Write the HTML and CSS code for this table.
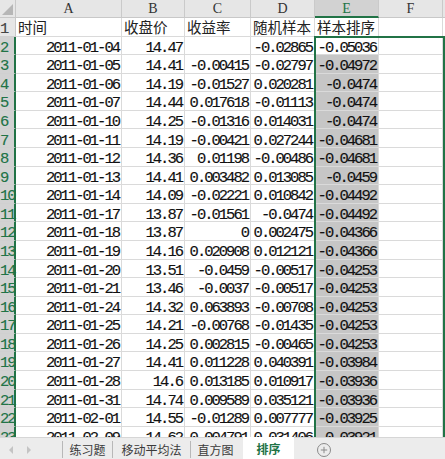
FILE: index.html
```html
<!DOCTYPE html>
<html lang="zh">
<head>
<meta charset="utf-8">
<link rel="stylesheet" href="styles.css">
</head>
<body>
<div class="sheet">
  <div class="grid" id="grid">
    <div class="corner"><span class="tri"></span></div>
    <div class="ch">A</div>
    <div class="ch">B</div>
    <div class="ch">C</div>
    <div class="ch">D</div>
    <div class="ch ch-sel">E</div>
    <div class="ch">F</div>
    <div class="ch"></div>

    <div class="rh">1</div>
    <div class="c t">时间</div><div class="c t">收盘价</div><div class="c t">收益率</div><div class="c t">随机样本</div><div class="c t">样本排序</div><div class="c"></div><div class="c"></div>

    <div class="rh rh-sel">2</div>
    <div class="c">2011-01-04</div><div class="c">14.47</div><div class="c"></div><div class="c">-0.02865</div><div class="c">-0.05036</div><div class="c"></div><div class="c"></div>

    <div class="rh rh-sel">3</div>
    <div class="c">2011-01-05</div><div class="c">14.41</div><div class="c">-0.00415</div><div class="c">-0.02797</div><div class="c e">-0.04972</div><div class="c"></div><div class="c"></div>

    <div class="rh rh-sel">4</div>
    <div class="c">2011-01-06</div><div class="c">14.19</div><div class="c">-0.01527</div><div class="c">0.020281</div><div class="c e">-0.0474</div><div class="c"></div><div class="c"></div>

    <div class="rh rh-sel">5</div>
    <div class="c">2011-01-07</div><div class="c">14.44</div><div class="c">0.017618</div><div class="c">-0.01113</div><div class="c e">-0.0474</div><div class="c"></div><div class="c"></div>

    <div class="rh rh-sel">6</div>
    <div class="c">2011-01-10</div><div class="c">14.25</div><div class="c">-0.01316</div><div class="c">0.014031</div><div class="c e">-0.0474</div><div class="c"></div><div class="c"></div>

    <div class="rh rh-sel">7</div>
    <div class="c">2011-01-11</div><div class="c">14.19</div><div class="c">-0.00421</div><div class="c">0.027244</div><div class="c e">-0.04681</div><div class="c"></div><div class="c"></div>

    <div class="rh rh-sel">8</div>
    <div class="c">2011-01-12</div><div class="c">14.36</div><div class="c">0.01198</div><div class="c">-0.00486</div><div class="c e">-0.04681</div><div class="c"></div><div class="c"></div>

    <div class="rh rh-sel">9</div>
    <div class="c">2011-01-13</div><div class="c">14.41</div><div class="c">0.003482</div><div class="c">0.013085</div><div class="c e">-0.0459</div><div class="c"></div><div class="c"></div>

    <div class="rh rh-sel">10</div>
    <div class="c">2011-01-14</div><div class="c">14.09</div><div class="c">-0.02221</div><div class="c">0.010842</div><div class="c e">-0.04492</div><div class="c"></div><div class="c"></div>

    <div class="rh rh-sel">11</div>
    <div class="c">2011-01-17</div><div class="c">13.87</div><div class="c">-0.01561</div><div class="c">-0.0474</div><div class="c e">-0.04492</div><div class="c"></div><div class="c"></div>

    <div class="rh rh-sel">12</div>
    <div class="c">2011-01-18</div><div class="c">13.87</div><div class="c">0</div><div class="c">0.002475</div><div class="c e">-0.04366</div><div class="c"></div><div class="c"></div>

    <div class="rh rh-sel">13</div>
    <div class="c">2011-01-19</div><div class="c">14.16</div><div class="c">0.020908</div><div class="c">0.012121</div><div class="c e">-0.04366</div><div class="c"></div><div class="c"></div>

    <div class="rh rh-sel">14</div>
    <div class="c">2011-01-20</div><div class="c">13.51</div><div class="c">-0.0459</div><div class="c">-0.00517</div><div class="c e">-0.04253</div><div class="c"></div><div class="c"></div>

    <div class="rh rh-sel">15</div>
    <div class="c">2011-01-21</div><div class="c">13.46</div><div class="c">-0.0037</div><div class="c">-0.00517</div><div class="c e">-0.04253</div><div class="c"></div><div class="c"></div>

    <div class="rh rh-sel">16</div>
    <div class="c">2011-01-24</div><div class="c">14.32</div><div class="c">0.063893</div><div class="c">-0.00708</div><div class="c e">-0.04253</div><div class="c"></div><div class="c"></div>

    <div class="rh rh-sel">17</div>
    <div class="c">2011-01-25</div><div class="c">14.21</div><div class="c">-0.00768</div><div class="c">-0.01435</div><div class="c e">-0.04253</div><div class="c"></div><div class="c"></div>

    <div class="rh rh-sel">18</div>
    <div class="c">2011-01-26</div><div class="c">14.25</div><div class="c">0.002815</div><div class="c">-0.00465</div><div class="c e">-0.04253</div><div class="c"></div><div class="c"></div>

    <div class="rh rh-sel">19</div>
    <div class="c">2011-01-27</div><div class="c">14.41</div><div class="c">0.011228</div><div class="c">0.040391</div><div class="c e">-0.03984</div><div class="c"></div><div class="c"></div>

    <div class="rh rh-sel">20</div>
    <div class="c">2011-01-28</div><div class="c">14.6</div><div class="c">0.013185</div><div class="c">0.010917</div><div class="c e">-0.03936</div><div class="c"></div><div class="c"></div>

    <div class="rh rh-sel">21</div>
    <div class="c">2011-01-31</div><div class="c">14.74</div><div class="c">0.009589</div><div class="c">0.035121</div><div class="c e">-0.03936</div><div class="c"></div><div class="c"></div>

    <div class="rh rh-sel">22</div>
    <div class="c">2011-02-01</div><div class="c">14.55</div><div class="c">-0.01289</div><div class="c">0.007777</div><div class="c e">-0.03925</div><div class="c"></div><div class="c"></div>

    <div class="rh rh-sel">23</div>
    <div class="c">2011-02-09</div><div class="c">14.62</div><div class="c">0.004791</div><div class="c">0.031406</div><div class="c e">-0.03921</div><div class="c"></div><div class="c"></div>

    <div class="selbox"></div>
  </div>

  <div class="tabs">
    <div class="nav">
      <span class="arrow arrow-l"></span>
      <span class="arrow arrow-r"></span>
    </div>
    <div class="tab">练习题</div>
    <div class="tab tab-wide">移动平均法</div>
    <div class="tab">直方图</div>
    <div class="tab tab-active">排序</div>
    <div class="add">
      <svg width="16" height="16" viewBox="0 0 16 16">
        <circle cx="8" cy="8" r="6.5" fill="none" stroke="#8a8a8a" stroke-width="1"/>
        <path d="M8 4.8v6.4M4.8 8h6.4" stroke="#8a8a8a" stroke-width="1"/>
      </svg>
    </div>
  </div>
</div>
</body>
</html>
```

FILE: styles.css
```css
* { box-sizing: border-box; }

html, body {
  margin: 0;
  padding: 0;
  background: #ffffff;
}

.sheet {
  width: 445px;
  height: 459px;
  display: flex;
  flex-direction: column;
  overflow: hidden;
}

.grid {
  position: relative;
  height: 437px;
  flex: none;
  overflow: hidden;
  display: grid;
  grid-template-columns: 16px 106px 63px 66px 64px 64px 64px 1fr;
  grid-template-rows: 18px repeat(23, 18.58px);
  background: #ffffff;
}

.corner {
  background: #e6e6e6;
  border-right: 1px solid #c8c8c8;
  border-bottom: 1px solid #c8c8c8;
  position: relative;
}

.tri {
  position: absolute;
  right: 2px;
  bottom: 2px;
  width: 0;
  height: 0;
  border-left: 11px solid transparent;
  border-bottom: 11px solid #b6b6b6;
}

.ch {
  background: #e6e6e6;
  border-right: 1px solid #cacaca;
  border-bottom: 1px solid #c8c8c8;
  font-family: "Liberation Serif", serif;
  font-size: 14px;
  color: #333333;
  display: flex;
  align-items: center;
  justify-content: center;
  padding-top: 1px;
}

.ch-sel {
  background: #d2d2d2;
  color: #217346;
  border-bottom: 2px solid #217346;
}

.rh {
  background: #e6e6e6;
  border-right: 1px solid #c8c8c8;
  border-bottom: 1px solid #d0d0d0;
  font-family: "Liberation Mono", monospace;
  font-size: 15.5px;
  letter-spacing: -2px;
  -webkit-text-stroke: 0.15px currentColor;
  color: #444444;
  display: flex;
  align-items: flex-end;
  line-height: 12px;
  padding-left: 0;
  padding-bottom: 0.5px;
  white-space: nowrap;
}

.rh-sel {
  background: #d2d2d2;
  color: #217346;
  border-right: 2px solid #217346;
}

.c {
  border-right: 1px solid #dadada;
  border-bottom: 1px solid #dadada;
  font-family: "Liberation Mono", monospace;
  font-size: 15.5px;
  letter-spacing: -2px;
  -webkit-text-stroke: 0.15px currentColor;
  color: #111111;
  display: flex;
  align-items: flex-end;
  justify-content: flex-end;
  line-height: 12px;
  padding: 0 2px 0.5px 0;
  white-space: nowrap;
}

.c.t {
  font-family: "Noto Sans CJK SC", sans-serif;
  letter-spacing: 0;
  -webkit-text-stroke: 0;
  font-size: 14.5px;
  justify-content: flex-start;
  padding: 0 0 1px 2px;
  line-height: 16px;
  color: #222222;
}

.c.e {
  background: #c6c6c6;
}

.selbox {
  position: absolute;
  grid-column: 6;
  grid-row: 3 / 25;
  top: -1px;
  left: -1px;
  right: 0;
  bottom: 0;
  border: 2px solid #217346;
  z-index: 2;
  pointer-events: none;
}

.tabs {
  flex: 1;
  background: #ececec;
  border-top: 1px solid #d6d6d6;
  display: flex;
  align-items: stretch;
  font-family: "Noto Sans CJK SC", sans-serif;
  font-size: 12px;
  color: #3a3a3a;
  position: relative;
  z-index: 3;
}

.nav {
  width: 62px;
  display: flex;
  align-items: center;
  padding-left: 9px;
  gap: 14px;
}

.arrow {
  width: 0;
  height: 0;
  border-top: 4px solid transparent;
  border-bottom: 4px solid transparent;
}

.arrow-l { border-right: 4px solid #c4c4c4; }
.arrow-r { border-left: 4px solid #c4c4c4; }

.tab {
  border-left: 1px solid #b8b8b8;
  margin: 3px 0 4px;
  padding: 0 5px;
  display: flex;
  align-items: center;
  justify-content: center;
  width: 50px;
  white-space: nowrap;
}

.tab-wide { width: 78px; }

.tab-active {
  margin: -1px 0 0 3px;
  width: 51px;
  background: #ffffff;
  color: #217346;
  font-weight: bold;
  border-left: none;
  border-bottom: 2px solid #217346;
}

.add {
  margin-left: 22px;
  display: flex;
  align-items: center;
}
```
